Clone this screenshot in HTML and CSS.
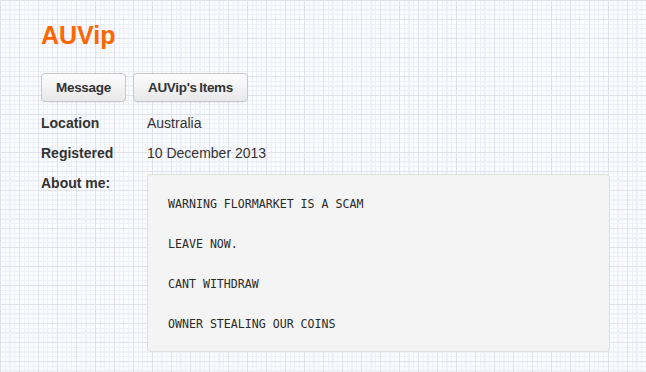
FILE: index.html
```html
<!DOCTYPE html>
<html lang="en">
<head>
  <meta charset="UTF-8">
  <title>AUVip</title>
<link rel="stylesheet" href="styles.css">
</head>
<body>
  <div class="profile">
    <h1>AUVip</h1>
    <div class="actions">
      <button>Message</button>
      <button>AUVip's Items</button>
    </div>
    <div class="details">
      <div class="label">Location</div>
      <div class="value">Australia</div>
      <div class="label">Registered</div>
      <div class="value">10 December 2013</div>
      <div class="label">About me:</div>
      <pre class="about">WARNING FLORMARKET IS A SCAM

LEAVE NOW.

CANT WITHDRAW

OWNER STEALING OUR COINS</pre>
    </div>
  </div>
</body>
</html>
```

FILE: styles.css
```css
body {
  margin: 0;
  font-family: "Liberation Sans", Arial, sans-serif;
  color: #333;
  background-color: #fbfcff;
  background-image:
    repeating-linear-gradient(to right, #dfe3ee 0 1px, transparent 1px 19px),
    repeating-linear-gradient(to bottom, #dfe3ee 0 1px, transparent 1px 19px),
    repeating-linear-gradient(to right, #eef0f7 0 1px, transparent 1px 4.75px),
    repeating-linear-gradient(to bottom, #eef0f7 0 1px, transparent 1px 4.75px);
}

.profile {
  padding: 20px 36px 20px 41px;
}

h1 {
  margin: 0 0 23px;
  font-size: 25px;
  line-height: 30px;
  color: #ff6600;
}

.actions {
  display: flex;
  gap: 7px;
  margin-bottom: 11px;
}

.actions button {
  height: 29px;
  padding: 0 14px;
  font-family: "Liberation Sans", Arial, sans-serif;
  font-size: 13.5px;
  font-weight: bold;
  letter-spacing: -0.3px;
  word-spacing: -1px;
  color: #333;
  background: linear-gradient(#fdfdfd, #e8e8e8);
  border: 1px solid #c8c8c8;
  border-radius: 4px;
  box-shadow: 0 1px 1px rgba(0, 0, 0, 0.05);
}

.details {
  display: grid;
  grid-template-columns: 106px 1fr;
  row-gap: 10px;
  font-size: 14px;
  line-height: 20px;
}

.label {
  font-weight: bold;
}

.about {
  margin: 1px 0 0;
  padding: 19px 20px 17px;
  background: #f4f4f4;
  border: 1px solid #dedede;
  border-radius: 4px;
  font-family: "DejaVu Sans Mono", monospace;
  font-size: 11.6px;
  line-height: 20px;
  color: #2a2a2a;
}
```
